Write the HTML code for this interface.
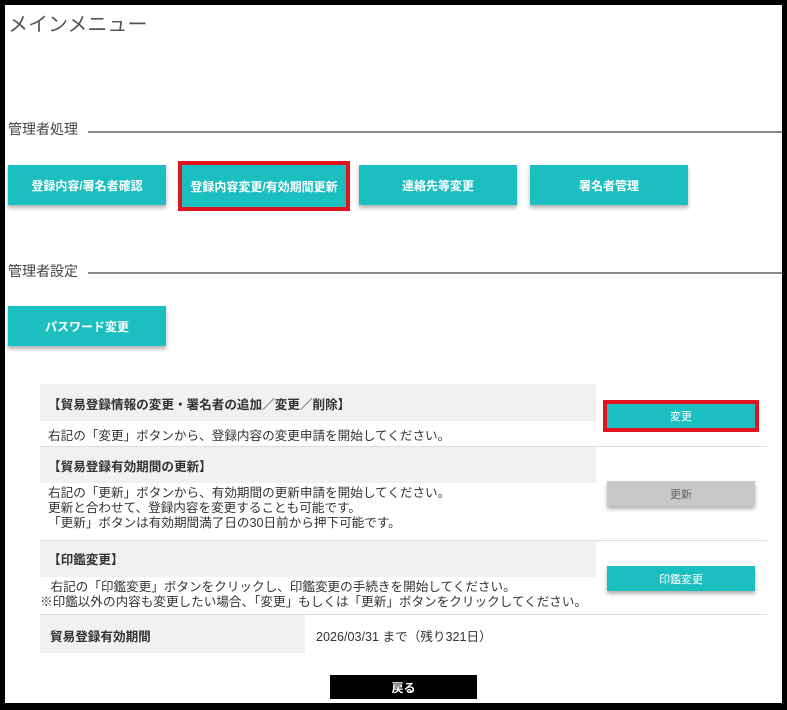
<!DOCTYPE html>
<html><head><meta charset="utf-8"><style>
*{margin:0;padding:0;box-sizing:border-box}
body{width:787px;height:710px;background:#000;font-family:"Liberation Sans","Noto Sans CJK JP",sans-serif;position:relative;overflow:hidden}
#pg{position:absolute;left:5px;top:5px;width:777px;height:698px;background:#fff}
.a{position:absolute}
.t{color:#444}
.btn{position:absolute;background:#1bbfbf;color:#fff;font-weight:bold;font-size:12px;display:flex;align-items:center;justify-content:center;box-shadow:0 3px 4px rgba(0,0,0,.3)}
.g{background:#f1f1f1}
.s{font-size:12.6px;color:#333;white-space:nowrap}
</style></head><body>
<div id="pg"></div>
<div class="a t" style="left:8px;top:8px;font-size:20px;color:#555">メインメニュー</div>
<div class="a t" style="left:8px;top:119px;font-size:14px">管理者処理</div>
<div class="a" style="left:88px;top:131px;width:694px;height:2px;background:#888"></div>
<div class="btn" style="left:8px;top:165px;width:158px;height:40px">登録内容/署名者確認</div>
<div class="a" style="left:178px;top:161px;width:172px;height:50px;border:4px solid #e0141e"></div>
<div class="btn" style="left:182px;top:165px;width:164px;height:42px;box-shadow:none">登録内容変更/有効期間更新</div>
<div class="btn" style="left:359px;top:165px;width:158px;height:40px">連絡先等変更</div>
<div class="btn" style="left:530px;top:165px;width:158px;height:40px">署名者管理</div>
<div class="a t" style="left:8px;top:261px;font-size:14px">管理者設定</div>
<div class="a" style="left:88px;top:272px;width:694px;height:2px;background:#888"></div>
<div class="btn" style="left:8px;top:306px;width:158px;height:40px">パスワード変更</div>

<div class="a g" style="left:40px;top:384px;width:556px;height:37px"></div>
<div class="a s" style="left:48px;top:394px;font-weight:bold">【貿易登録情報の変更・署名者の追加／変更／削除】</div>
<div class="a s" style="left:48px;top:425px">右記の「変更」ボタンから、登録内容の変更申請を開始してください。</div>
<div class="a" style="left:40px;top:446px;width:727px;height:1px;background:#ddd"></div>
<div class="a g" style="left:40px;top:447px;width:556px;height:36px"></div>
<div class="a s" style="left:48px;top:456px;font-weight:bold">【貿易登録有効期間の更新】</div>
<div class="a s" style="left:48px;top:486px;line-height:15px">右記の「更新」ボタンから、有効期間の更新申請を開始してください。<br>更新と合わせて、登録内容を変更することも可能です。<br>「更新」ボタンは有効期間満了日の30日前から押下可能です。</div>
<div class="a" style="left:40px;top:540px;width:727px;height:1px;background:#ddd"></div>
<div class="a g" style="left:40px;top:541px;width:556px;height:36px"></div>
<div class="a s" style="left:48px;top:549px;font-weight:bold">【印鑑変更】</div>
<div class="a s" style="left:40px;top:580px;line-height:15px">&nbsp;&nbsp;&nbsp;右記の「印鑑変更」ボタンをクリックし、印鑑変更の手続きを開始してください。<br>※印鑑以外の内容も変更したい場合、「変更」もしくは「更新」ボタンをクリックしてください。</div>
<div class="a" style="left:40px;top:614px;width:727px;height:1px;background:#ddd"></div>
<div class="a g" style="left:40px;top:615px;width:265px;height:38px"></div>
<div class="a s" style="left:50px;top:626px;font-weight:bold">貿易登録有効期間</div>
<div class="a s" style="left:316px;top:626px;font-size:12.6px">2026/03/31 まで（残り321日）</div>

<div class="a" style="left:603px;top:400px;width:156px;height:32px;border:4px solid #e0141e"></div>
<div class="btn" style="left:607px;top:404px;width:148px;height:24px;font-weight:normal;font-size:11px;box-shadow:none">変更</div>
<div class="btn" style="left:607px;top:481px;width:148px;height:25px;font-weight:normal;font-size:11px;background:#c8c8c8;color:#666">更新</div>
<div class="btn" style="left:607px;top:566px;width:148px;height:25px;font-weight:normal;font-size:11px">印鑑変更</div>
<div class="btn" style="left:330px;top:675px;width:147px;height:24px;background:#000;box-shadow:none">戻る</div>
</body></html>
